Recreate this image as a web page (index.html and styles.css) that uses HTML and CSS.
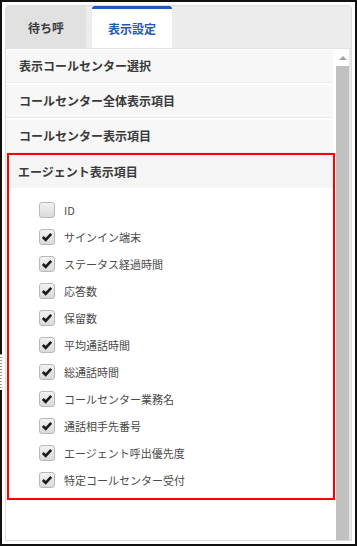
FILE: index.html
```html
<!DOCTYPE html>
<html lang="ja">
<head>
<meta charset="UTF-8" />
<meta name="viewport" content="width=device-width, initial-scale=1" />
<title>表示設定</title>
<link rel="stylesheet" href="styles.css">
</head>
<body>
  <div class="frame">
    <div class="grip"></div>
    <div class="panel">
      <div class="tabs">
        <div class="tab">待ち呼</div>
        <div class="tab active">表示設定</div>
      </div>
      <div class="content">
        <div class="list">
          <div class="acc-head">表示コールセンター選択</div>
          <div class="acc-head">コールセンター全体表示項目</div>
          <div class="acc-head">コールセンター表示項目</div>
          <div class="acc open">
            <div class="acc-title">エージェント表示項目</div>
            <ul class="items">
              <li><span class="cb"></span>ID</li>
              <li><span class="cb checked"><svg viewBox="0 0 16 16"><path d="M3.2 8 L6.5 11.2 L12.8 4.4"/></svg></span>サインイン端末</li>
              <li><span class="cb checked"><svg viewBox="0 0 16 16"><path d="M3.2 8 L6.5 11.2 L12.8 4.4"/></svg></span>ステータス経過時間</li>
              <li><span class="cb checked"><svg viewBox="0 0 16 16"><path d="M3.2 8 L6.5 11.2 L12.8 4.4"/></svg></span>応答数</li>
              <li><span class="cb checked"><svg viewBox="0 0 16 16"><path d="M3.2 8 L6.5 11.2 L12.8 4.4"/></svg></span>保留数</li>
              <li><span class="cb checked"><svg viewBox="0 0 16 16"><path d="M3.2 8 L6.5 11.2 L12.8 4.4"/></svg></span>平均通話時間</li>
              <li><span class="cb checked"><svg viewBox="0 0 16 16"><path d="M3.2 8 L6.5 11.2 L12.8 4.4"/></svg></span>総通話時間</li>
              <li><span class="cb checked"><svg viewBox="0 0 16 16"><path d="M3.2 8 L6.5 11.2 L12.8 4.4"/></svg></span>コールセンター業務名</li>
              <li><span class="cb checked"><svg viewBox="0 0 16 16"><path d="M3.2 8 L6.5 11.2 L12.8 4.4"/></svg></span>通話相手先番号</li>
              <li><span class="cb checked"><svg viewBox="0 0 16 16"><path d="M3.2 8 L6.5 11.2 L12.8 4.4"/></svg></span>エージェント呼出優先度</li>
              <li><span class="cb checked"><svg viewBox="0 0 16 16"><path d="M3.2 8 L6.5 11.2 L12.8 4.4"/></svg></span>特定コールセンター受付</li>
            </ul>
          </div>
        </div>
        <div class="scrollbar">
          <div class="sb-arrow"></div>
          <div class="sb-thumb"></div>
        </div>
      </div>
    </div>
  </div>
</body>
</html>
```

FILE: styles.css
```css
body {
  margin: 0;
  background-color: #fff;
  font-family: "Noto Sans CJK JP", "Noto Sans", sans-serif;
}
.frame {
  position: relative;
  width: 357px;
  height: 546px;
  box-sizing: border-box;
  border: 2px solid #111;
  padding: 3px;
}
.grip {
  position: absolute;
  left: -2px;
  top: 352px;
  width: 2px;
  height: 36px;
  background: repeating-linear-gradient(#999 0 1px, #fff 1px 3px);
}
.panel {
  height: 100%;
  box-sizing: border-box;
  display: flex;
  flex-direction: column;
  background-color: #ececec;
  border: 1px solid #dddddd;
  border-radius: 4px 4px 0 0;
}
.tabs {
  display: flex;
  gap: 6px;
  height: 42px;
  flex-shrink: 0;
}
.tab {
  width: 80px;
  display: flex;
  align-items: center;
  justify-content: center;
  font-size: 12px;
  font-weight: bold;
  color: #3a3a3a;
  background-color: #e1e1e1;
  border-radius: 3px 3px 0 0;
}
.tab.active {
  background-color: #fff;
  color: #1d5bb5;
  border-top: 3px solid #1e5bbf;
  box-sizing: border-box;
}
.content {
  flex: 1;
  display: flex;
  background-color: #fff;
  border-top: 1px solid #e2e2e2;
  min-height: 0;
}
.list {
  flex: 1;
  padding-top: 1px;
}
.acc-head {
  height: 33px;
  box-sizing: border-box;
  margin: 2px 3px 0 0;
  padding-left: 13px;
  line-height: 32px;
  font-size: 12px;
  font-weight: bold;
  color: #3a3a3a;
  background-color: #f7f7f7;
  border-bottom: 1px solid #ebebeb;
}
.acc-head:first-child {
  margin-top: 0;
}
.acc.open {
  margin: 0 1px;
  border: 2px solid #f00;
}
.acc-title {
  height: 33px;
  padding-left: 9px;
  line-height: 33px;
  font-size: 12px;
  font-weight: bold;
  color: #3a3a3a;
  background-color: #f5f5f5;
}
.items {
  list-style: none;
  margin: 0;
  padding: 8px 0 5px 30px;
}
.items li {
  height: 27px;
  display: flex;
  align-items: center;
  gap: 9px;
  font-size: 11px;
  color: #4a4a4a;
}
.cb {
  width: 16px;
  height: 16px;
  box-sizing: border-box;
  border: 1px solid #b8b8b8;
  border-radius: 3px;
  background: linear-gradient(#f2f2f2, #dadada);
  display: flex;
}
.cb svg {
  width: 14px;
  height: 14px;
}
.cb svg path {
  fill: none;
  stroke: #1a1a1a;
  stroke-width: 3;
}
.scrollbar {
  width: 13px;
  display: flex;
  flex-direction: column;
  border-right: 2px solid #e8e8e8;
}
.sb-arrow {
  height: 17px;
  display: flex;
  justify-content: center;
  align-items: center;
}
.sb-arrow::before {
  content: "";
  border-left: 4px solid transparent;
  border-right: 4px solid transparent;
  border-bottom: 4px solid #a3a3a3;
}
.sb-thumb {
  flex: 1;
  background-color: #c1c1c1;
}
```
